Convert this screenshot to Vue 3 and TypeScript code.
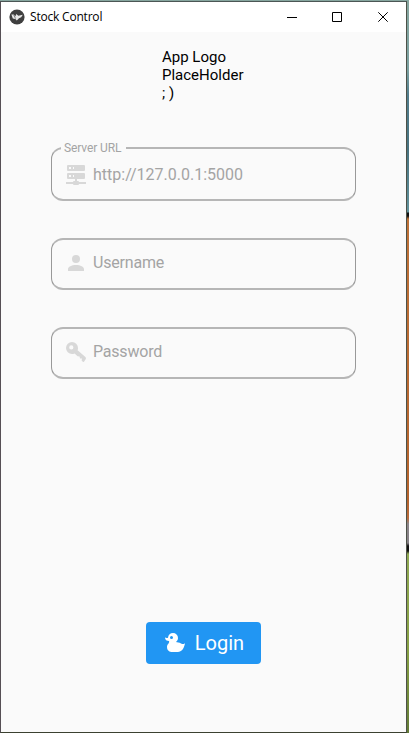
<script setup lang="ts">
interface Field {
  id: string
  hint: string
  value: string
  icon: string
}

const fields: Field[] = [
  {
    id: 'server',
    hint: 'Server URL',
    value: 'http://127.0.0.1:5000',
    icon: 'M13,18H14A1,1 0 0,1 15,19H22V21H15A1,1 0 0,1 14,22H10A1,1 0 0,1 9,21H2V19H9A1,1 0 0,1 10,18H11V16H4A1,1 0 0,1 3,15V11A1,1 0 0,1 4,10H20A1,1 0 0,1 21,11V15A1,1 0 0,1 20,16H13V18M4,2H20A1,1 0 0,1 21,3V7A1,1 0 0,1 20,8H4A1,1 0 0,1 3,7V3A1,1 0 0,1 4,2M9,6H10V4H9V6M9,14H10V12H9V14M5,4V6H7V4H5M5,12V14H7V12H5Z',
  },
  {
    id: 'username',
    hint: 'Username',
    value: '',
    icon: 'M12,4A4,4 0 0,1 16,8A4,4 0 0,1 12,12A4,4 0 0,1 8,8A4,4 0 0,1 12,4M12,14C16.42,14 20,15.79 20,18V20H4V18C4,15.79 7.58,14 12,14Z',
  },
  {
    id: 'password',
    hint: 'Password',
    value: '',
    icon: 'M8,2A6,6 0 0,1 14,8C14,8.8 13.85,9.5 13.6,10.2L21.4,17Q22.4,18 21.8,19L20,21.7Q19.3,22.4 18.5,21.6L17.6,20.4L18,18.6L16,18.4L15.6,16.4L13.6,16.2L10.6,13.4C9.8,13.8 8.9,14 8,14A6,6 0 0,1 2,8A6,6 0 0,1 8,2M7.3,5.3A2.1,2.1 0 0,0 5.2,7.4A2.1,2.1 0 0,0 7.3,9.5A2.1,2.1 0 0,0 9.4,7.4A2.1,2.1 0 0,0 7.3,5.3Z',
  },
]
</script>

<template>
  <div class="desktop">
    <div class="window">
      <header class="titlebar">
        <svg class="app-icon" viewBox="0 0 16 16">
          <circle cx="8" cy="8" r="7.6" fill="#3f3f3f" />
          <path d="M2.4 5.4L4.8 5.6L6.4 7.6L7.2 5L9.4 6.8L13.8 5.8L12.2 8.2L10 9.2L7.8 11.4L6.4 10L3.8 9.6Z" fill="#e8e8e8" />
          <path d="M4.6 5.8L6.6 9.6" stroke="#3f3f3f" stroke-width=".6" />
        </svg>
        <span class="title">Stock Control</span>
        <div class="controls">
          <svg viewBox="0 0 11 11"><path d="M1 5.5H11" /></svg>
          <svg viewBox="0 0 11 11"><path d="M.5 .5H9.5V9.5H.5Z" /></svg>
          <svg viewBox="0 0 11 11"><path d="M.3 .3L9.7 9.7M9.7 .3L.3 9.7" /></svg>
        </div>
      </header>
      <main class="content">
        <div class="logo">App Logo<br />PlaceHolder<br />; )</div>
        <form class="form" @submit.prevent>
          <div v-for="f in fields" :key="f.id" class="field" :class="{ filled: f.value }">
            <span v-if="f.value" class="label">{{ f.hint }}</span>
            <svg class="icon" viewBox="0 0 24 24"><path :d="f.icon" /></svg>
            <span class="text">{{ f.value || f.hint }}</span>
          </div>
        </form>
        <button class="login" type="button">
          <svg viewBox="0 0 24 24">
            <path d="M8.5,5A1.5,1.5 0 0,0 7,6.5A1.5,1.5 0 0,0 8.5,8A1.5,1.5 0 0,0 10,6.5A1.5,1.5 0 0,0 8.5,5M10,2A5,5 0 0,1 15,7C15,8.7 14.15,10.2 12.86,11.1C14.44,11.25 16.22,11.61 18,12.5C21,14 22,12 22,12C22,12 21,21 15,21H9C9,21 4,21 4,16C4,13 7,12 6,10C2,10 2,6.5 2,6.5C3,7 4.24,7 5,6.65C5.19,4.05 7.36,2 10,2Z" />
          </svg>
          <span>Login</span>
        </button>
      </main>
    </div>
  </div>
</template>

<style>
body {
  margin: 0;
  overflow: hidden;
}
</style>

<style scoped>
.desktop {
  box-sizing: border-box;
  width: 409px;
  height: 733px;
  padding: 1px 2px 0 0;
  background: linear-gradient(
    to bottom,
    #86a69f 0,
    #7ba0a0 70px,
    #527d8c 95px,
    #48727f 150px,
    #62929b 212px,
    #101010 213px,
    #101010 216px,
    #bd7138 219px,
    #b4632d 500px,
    #b96b3b 518px,
    #8b8589 524px,
    #858085 543px,
    #101010 546px,
    #101010 551px,
    #8fa852 554px,
    #87a045 650px,
    #637b37 733px
  );
}
.window {
  box-sizing: border-box;
  display: flex;
  flex-direction: column;
  height: 732px;
  border: 1px solid;
  border-color: #4b5655 #4c5148 #3b4130 #554f54;
  background: #fafafa;
  font-family: Roboto, sans-serif;
}
.titlebar {
  display: flex;
  flex: none;
  align-items: center;
  height: 30px;
  padding-left: 8px;
  background: #fff;
}
.app-icon {
  width: 16px;
  height: 16px;
}
.title {
  margin-left: 5px;
  color: #000;
  font: 12px/16px 'Open Sans', sans-serif;
  letter-spacing: -0.2px;
  white-space: nowrap;
}
.controls {
  display: flex;
  gap: 35px;
  margin-left: auto;
  padding-right: 17px;
}
.controls svg {
  width: 11px;
  height: 11px;
  fill: none;
  stroke: #000;
  stroke-width: 1;
}
.content {
  display: flex;
  flex: 1;
  flex-direction: column;
  align-items: center;
  padding: 16px 0 68px;
}
.logo {
  width: 82px;
  margin-left: -1px;
  color: #000;
  font-size: 15px;
  line-height: 18px;
  white-space: nowrap;
}
.form {
  display: flex;
  flex-direction: column;
  gap: 37px;
  width: 305px;
  margin-top: 45px;
}
.field {
  position: relative;
  box-sizing: border-box;
  display: flex;
  align-items: center;
  height: 52px;
  padding: 0 12px 2px;
  border: solid #b6b6b6;
  border-width: 2px 1px;
  border-right-color: #999;
  border-left-color: #999;
  border-radius: 12px;
  color: #a4a4a4;
  letter-spacing: -0.2px;
}
.field.filled {
  height: 54px;
  padding-top: 1px;
  padding-bottom: 0;
  letter-spacing: 0;
}
.label {
  position: absolute;
  top: -8px;
  left: 9px;
  padding: 0 5px 0 3px;
  background: #fafafa;
  font-size: 12px;
  line-height: 14px;
  letter-spacing: -0.1px;
  white-space: nowrap;
}
.icon {
  width: 24px;
  height: 24px;
  margin-left: -0.4px;
  fill: #d8d8d8;
}
.text {
  margin-left: 5.4px;
  font-size: 16px;
  line-height: 20px;
  white-space: nowrap;
}
.login {
  display: flex;
  align-items: center;
  justify-content: center;
  gap: 8px;
  width: 115px;
  height: 42px;
  margin-top: auto;
  padding: 0;
  border: 0;
  border-radius: 4px;
  background: #2196f3;
  color: #fff;
  font: 20px/24px Roboto, sans-serif;
}
.login svg {
  width: 24px;
  height: 24px;
  fill: #fff;
}
</style>
